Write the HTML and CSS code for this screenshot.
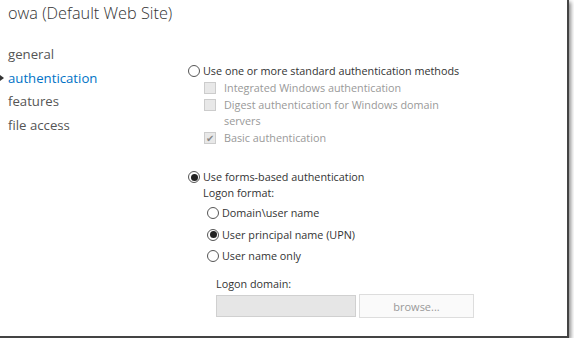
FILE: index.html
```html
<!DOCTYPE html>
<html lang="en">
<head>
    <meta charset="UTF-8">
    <title>owa (Default Web Site)</title>
    <link rel="stylesheet" href="styles.css">
</head>
<body>
<div class="frame">
    <h1 class="title">owa (Default Web Site)</h1>
    <div class="main">
        <ul class="nav">
            <li>general</li>
            <li class="active">authentication</li>
            <li>features</li>
            <li>file access</li>
        </ul>
        <div class="content">
            <label class="radio-row"><span class="radio"></span>Use one or more standard authentication methods</label>
            <div class="checks">
                <label class="check-row"><span class="check"></span>Integrated Windows authentication</label>
                <label class="check-row"><span class="check"></span>Digest authentication for Windows domain<br>servers</label>
                <label class="check-row"><span class="check checked">&#10004;</span>Basic authentication</label>
            </div>

            <label class="radio-row forms"><span class="radio on"></span>Use forms-based authentication</label>
            <div class="logon">
                <div class="label">Logon format:</div>
                <div class="formats">
                    <label class="radio-row"><span class="radio"></span>Domain\user name</label>
                    <label class="radio-row"><span class="radio on"></span>User principal name (UPN)</label>
                    <label class="radio-row"><span class="radio"></span>User name only</label>
                </div>
                <div class="domain">
                    <div class="label">Logon domain:</div>
                    <div class="domain-row">
                        <input type="text" class="domain-input" disabled>
                        <button class="browse" disabled>browse...</button>
                    </div>
                </div>
            </div>
        </div>
    </div>
</div>
</body>
</html>
```

FILE: styles.css
```css
body {
    margin: 0;
    background: #fff;
    font-family: "Open Sans", "Noto Sans", sans-serif;
    color: #333;
}
.frame {
    width: 569px;
    height: 338px;
    box-sizing: border-box;
    border-right: 2px solid #444;
    border-bottom: 2px solid #444;
    box-shadow: 2px 2px 4px rgba(0, 0, 0, 0.45);
    background: #fff;
    overflow: hidden;
}
.title {
    margin: 0;
    padding: 1px 0 0 8px;
    font-size: 16.3px;
    font-weight: 300;
    color: #333;
    line-height: 24px;
}
.main {
    display: flex;
    margin-top: 18px;
}
.nav {
    list-style: none;
    margin: 0;
    padding: 0 0 0 8px;
    width: 180px;
    font-size: 13.2px;
    color: #555;
}
.nav li {
    line-height: 23.5px;
    position: relative;
}
.nav li.active {
    color: #0072c6;
}
.nav li.active::before {
    content: "";
    position: absolute;
    left: -8px;
    top: 8px;
    border-left: 4px solid #333;
    border-top: 3.5px solid transparent;
    border-bottom: 3.5px solid transparent;
}
.content {
    padding-top: 20px;
    font-size: 10.8px;
    color: #333;
    line-height: 16px;
}
.radio-row, .check-row {
    display: flex;
    align-items: center;
}
.radio {
    width: 12px;
    height: 12px;
    border: 1px solid #555;
    border-radius: 50%;
    margin-right: 3px;
    flex: none;
    box-sizing: border-box;
    display: flex;
    align-items: center;
    justify-content: center;
    background: #fff;
}
.radio.on::after {
    content: "";
    width: 7px;
    height: 7px;
    border-radius: 50%;
    background: #222;
}
.checks {
    padding-left: 16px;
    color: #999;
}
.check-row {
    align-items: flex-start;
    margin-top: 1px;
}
.check {
    width: 12px;
    height: 12px;
    border: 1px solid #ccc;
    background: #e8e8e8;
    box-sizing: border-box;
    margin: 2px 8px 0 0;
    flex: none;
    font-size: 10px;
    line-height: 10px;
    color: #888;
    text-align: center;
}
.forms {
    margin-top: 23px;
}
.logon {
    padding-left: 15px;
}
.formats {
    padding-left: 4px;
    margin-top: 4px;
}
.formats .radio-row {
    margin-bottom: 5.5px;
}
.domain {
    padding-left: 13px;
    margin-top: 12px;
}
.domain-row {
    display: flex;
    align-items: center;
    margin-top: 2px;
}
.domain-input {
    width: 140px;
    height: 22px;
    box-sizing: border-box;
    margin: 0 3px 0 0;
    border: 1px solid #d0d0d0;
    background: #e6e6e6;
}
.browse {
    width: 115px;
    height: 24px;
    margin: 0;
    border: 1px solid #ddd;
    background: #fafafa;
    color: #999;
    font-family: inherit;
    font-size: 11px;
}
```
